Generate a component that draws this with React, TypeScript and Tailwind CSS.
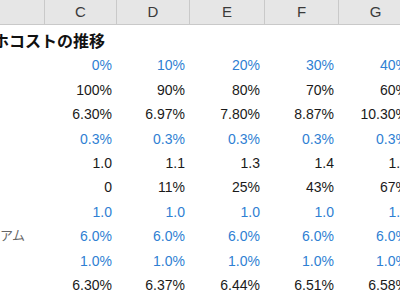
const cols = ['C', 'D', 'E', 'F', 'G'];
const widths = ['w-[72px]', 'w-[73px]', 'w-[75px]', 'w-[74px]', 'w-[74px]'];

type Row = { label?: string; blue?: boolean; values: string[] };

const rows: Row[] = [
  { blue: true, values: ['0%', '10%', '20%', '30%', '40%'] },
  { values: ['100%', '90%', '80%', '70%', '60%'] },
  { values: ['6.30%', '6.97%', '7.80%', '8.87%', '10.30%'] },
  { blue: true, values: ['0.3%', '0.3%', '0.3%', '0.3%', '0.3%'] },
  { values: ['1.0', '1.1', '1.3', '1.4', '1.7'] },
  { values: ['0', '11%', '25%', '43%', '67%'] },
  { blue: true, values: ['1.0', '1.0', '1.0', '1.0', '1.0'] },
  { label: 'アム', blue: true, values: ['6.0%', '6.0%', '6.0%', '6.0%', '6.0%'] },
  { blue: true, values: ['1.0%', '1.0%', '1.0%', '1.0%', '1.0%'] },
  { values: ['6.30%', '6.37%', '6.44%', '6.51%', '6.58%'] },
];

export default function App() {
  return (
    <div className="w-[400px] h-[300px] overflow-hidden bg-white font-['Liberation_Sans','Noto_Sans_CJK_JP',sans-serif]">
      <div className="flex h-[25px] bg-[#e6e6e6] border-b border-[#c9c9c9] text-[15px] text-[#3a3a3a] w-max">
        <div className="w-[45px] shrink-0 border-r border-[#c9c9c9]" />
        {cols.map((c, i) => (
          <div key={c} className={`${widths[i]} shrink-0 border-r border-[#c9c9c9] flex items-center justify-center`}>
            {c}
          </div>
        ))}
      </div>

      <div className="h-[24.4px] flex items-start pt-[6px] overflow-hidden">
        <span className="-ml-[7px] text-[16px] leading-[18px] font-bold text-[#111] whitespace-nowrap font-['Noto_Sans_CJK_JP',sans-serif]">
          ホコストの推移
        </span>
      </div>

      {rows.map((r, ri) => (
        <div key={ri} className="flex h-[24.4px] w-max text-[14px] leading-[16px]">
          <div className="w-[44px] shrink-0 pt-[7px] text-[13px] text-[#666] whitespace-nowrap font-['Noto_Sans_CJK_JP',serif]">
            {r.label}
          </div>
          {r.values.map((v, i) => (
            <div
              key={i}
              className={`${widths[i]} shrink-0 text-right pr-[4px] pt-[8px] whitespace-nowrap ${r.blue ? 'text-[#2f7fd3]' : 'text-[#1a1a1a]'}`}
            >
              {v}
            </div>
          ))}
        </div>
      ))}
    </div>
  );
}
